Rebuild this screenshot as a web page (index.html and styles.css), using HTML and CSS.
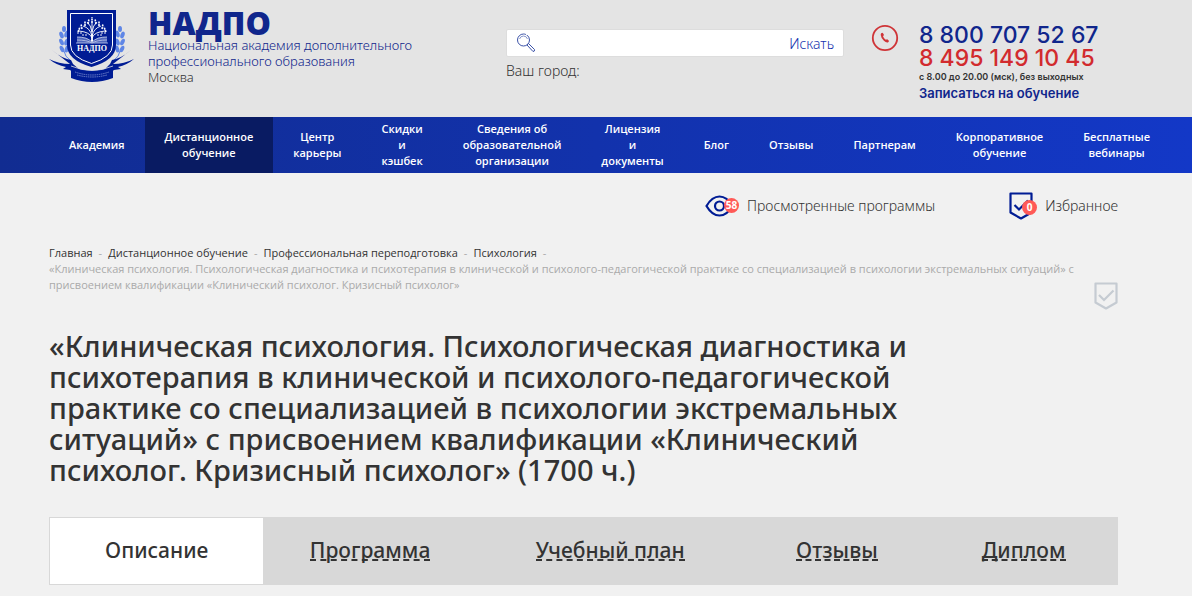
FILE: index.html
```html
<!DOCTYPE html>
<html lang="ru">
<head>
    <meta charset="UTF-8">
    <meta name="viewport" content="width=device-width, initial-scale=1.0">
    <title>НАДПО</title>
    <link rel="stylesheet" href="styles.css">
</head>
<body>
    <header class="header">
        <a class="logo" href="#">
            <svg class="logo-img" width="86" height="74" viewBox="0 0 86 74">
                <!-- колосья -->
                <g fill="#5f86e6">
                    <ellipse cx="15" cy="20" rx="2" ry="3"/>
                    <ellipse cx="12.500" cy="26" rx="2" ry="3.500" transform="rotate(-20 12.500 26)"/>
                    <ellipse cx="17.500" cy="25" rx="2" ry="3.500" transform="rotate(20 17.500 25)"/>
                    <ellipse cx="12.500" cy="33" rx="2" ry="3.500" transform="rotate(-25 12.500 33)"/>
                    <ellipse cx="17.500" cy="33" rx="2" ry="3.500" transform="rotate(20 17.500 33)"/>
                    <ellipse cx="13" cy="40" rx="2" ry="3.500" transform="rotate(-25 13 40)"/>
                    <ellipse cx="17.800" cy="40" rx="2" ry="3.500" transform="rotate(15 17.800 40)"/>
                    <ellipse cx="71" cy="20" rx="2" ry="3"/>
                    <ellipse cx="73.500" cy="26" rx="2" ry="3.500" transform="rotate(20 73.500 26)"/>
                    <ellipse cx="68.500" cy="25" rx="2" ry="3.500" transform="rotate(-20 68.500 25)"/>
                    <ellipse cx="73.500" cy="33" rx="2" ry="3.500" transform="rotate(25 73.500 33)"/>
                    <ellipse cx="68.500" cy="33" rx="2" ry="3.500" transform="rotate(-20 68.500 33)"/>
                    <ellipse cx="73" cy="40" rx="2" ry="3.500" transform="rotate(25 73 40)"/>
                    <ellipse cx="68.200" cy="40" rx="2" ry="3.500" transform="rotate(-15 68.200 40)"/>
                </g>
                <path d="M15 42q1 6 6 9M71 42q-1 6-6 9" fill="none" stroke="#5f86e6"/>
                <!-- лента -->
                <path d="M0 50q10 5 21 5L3 41q9 8 19 10l2 4 7 6v5q-6-1-10-5l-7-1 3-2Q7 56 0 50z" fill="#001c94"/>
                <path d="M85 50q-10 5-21 5l18-14q-9 8-19 10l-2 4-6 6v5q6-1 10-5l7-1-3-2q9-2 16-8z" fill="#001c94"/>
                <path d="M22 57q21 9 42 0v12q-21 8-42 0z" fill="#001c94"/>
                <path d="M22 57q21 9 42 0" fill="none" stroke="#e4e4e4" stroke-width=".8"/>
                <path d="M26 63q17 6 34 0M28 66q15 4 30 0" fill="none" stroke="#8494d2" stroke-width=".8" stroke-dasharray="1.500 .700"/>
                <!-- щит -->
                <path d="M18 1h49v35q0 15-24.500 22Q18 51 18 36z" fill="#001c94"/>
                <path d="M21.500 4.500h42V36q0 12-21 18.500Q21.500 48 21.500 36z" fill="none" stroke="#fff"/>
                <g fill="none" stroke="#fff" stroke-width=".9">
                    <path d="M43 34V14M43 29q-2-6-13-7M43 29q2-6 13-7M43 27q-2-8-9-10M43 27q2-8 9-10M43 23q-1-7-5-10M43 23q1-7 5-10"/>
                    <path d="M29 23l2-5M33 20l-1-5M36 17l0-5M39 15l1-5M57 23l-2-5M53 20l1-5M50 17l0-5M47 15l-1-5M43 14V8" stroke-dasharray="2 .600" stroke-width="1.600"/>
                    <path d="M28 24h6M52 24h6M33 26h5M48 26h5" stroke-dasharray="2 1"/>
                </g>
                <path d="M41.800 34q.700-4 .3-9h1.800q-.4 5 .5 9z" fill="#fff"/>
                <path d="M28 28q10-1 15 5 5-6 15-5v6H28z" fill="#4f65bb"/>
                <path d="M28 28q10 0 15 5 5-5 15-5M28 31q10 0 15 3 5-3 15-3M27 34h32" fill="none" stroke="#c3cbea" stroke-width=".8"/>
                <text class="logo-badge" x="43" y="42" text-anchor="middle">НАДПО</text>
            </svg>
            <span class="logo-text">
                <span class="logo-name">НАДПО</span>
                <span class="logo-desc">Национальная академия дополнительного профессионального образования</span>
                <span class="logo-city">Москва</span>
            </span>
        </a>

        <div class="search">
            <form class="search-form">
                <svg class="search-icon" width="20" height="20" viewBox="0 0 20 20" fill="none" stroke="#3b52a8">
                    <circle cx="7.500" cy="7" r="6" stroke-dasharray="30 1"/>
                    <path d="M3.500 6q1-3 4-3t4 3" stroke="#8998cb"/>
                    <path d="M11 12l1.500-1.500 6 6q.5 2-1.500 2z"/>
                </svg>
                <input class="search-input" type="text" aria-label="Поиск">
                <button class="search-btn" type="submit">Искать</button>
            </form>
            <div class="search-city">Ваш город:</div>
        </div>

        <div class="contacts">
            <svg width="28" height="28" viewBox="0 0 28 28">
                <circle cx="14" cy="14" r="12.200" fill="none" stroke="#cf3437" stroke-width="1.800"/>
                <path d="M10.200 9.300q1.200-1 2 .2l.8 1.600-1 1.200q.8 2 2.800 3.500l1.400-.6 1.500 1.400q.8 1-.8 1.800-1.800.5-4-1.600-3-3-3.200-5.800 0-1.200.5-1.700z" fill="#cf3437"/>
            </svg>
            <div class="contacts-list">
                <a class="phone" href="tel:88007075267">8 800 707 52 67</a>
                <a class="phone phone-red" href="tel:84951491045">8 495 149 10 45</a>
                <span class="worktime">с 8.00 до 20.00 (мск), без выходных</span>
                <a class="signup" href="#">Записаться на обучение</a>
            </div>
        </div>
    </header>

    <nav class="nav">
        <a class="nav-item" href="#">Академия</a>
        <a class="nav-item active" href="#">Дистанционное обучение</a>
        <a class="nav-item" href="#">Центр карьеры</a>
        <a class="nav-item" href="#">Скидки и кэшбек</a>
        <a class="nav-item" href="#">Сведения об образовательной организации</a>
        <a class="nav-item" href="#">Лицензия и документы</a>
        <a class="nav-item" href="#">Блог</a>
        <a class="nav-item" href="#">Отзывы</a>
        <a class="nav-item" href="#">Партнерам</a>
        <a class="nav-item" href="#">Корпоративное обучение</a>
        <a class="nav-item" href="#">Бесплатные вебинары</a>
    </nav>

    <main class="content">
        <div class="user-links">
            <a class="user-link" href="#">
                <span class="user-icon">
                    <svg width="30" height="22" viewBox="0 0 30 22" fill="none" stroke="#001c94" stroke-width="2.200">
                        <path d="M1.500 11Q7 1.500 14.500 1.500T27.500 11Q22 20.500 14.500 20.500T1.500 11z"/>
                        <circle cx="14.500" cy="11" r="4.500"/>
                    </svg>
                    <span class="badge">58</span>
                </span>
                Просмотренные программы
            </a>
            <a class="user-link" href="#">
                <span class="user-icon">
                    <svg width="24" height="28" viewBox="0 0 24 28" fill="none" stroke="#001c94" stroke-width="2.200">
                        <path d="M1.500 1.500h21v19L12 26.500l-10.500-6z" stroke-linejoin="round"/>
                        <path d="M5.500 13l4.500 4.500 9-9"/>
                    </svg>
                    <span class="badge badge-low">0</span>
                </span>
                Избранное
            </a>
        </div>

        <div class="breadcrumbs">
            <a href="#">Главная</a><span class="sep">-</span><a href="#">Дистанционное обучение</a><span class="sep">-</span><a href="#">Профессиональная переподготовка</a><span class="sep">-</span><a href="#">Психология</a><span class="sep">-</span>
            <div class="current">«Клиническая психология. Психологическая диагностика и психотерапия в клинической и психолого-педагогической практике со специализацией в психологии экстремальных ситуаций» с присвоением квалификации «Клинический психолог. Кризисный психолог»</div>
            <button class="favorite" type="button" aria-label="В избранное">
                <svg width="24" height="28" viewBox="0 0 24 28" fill="none" stroke="#c5cbd2" stroke-width="2.200">
                    <path d="M1.500 1.500h21v19L12 26.500l-10.500-6z" stroke-linejoin="round"/>
                    <path d="M5 13l5 5 9.500-9.500"/>
                </svg>
            </button>
        </div>

        <h1 class="title">«Клиническая психология. Психологическая диагностика и психотерапия в клинической и психолого-педагогической практике со специализацией в психологии экстремальных ситуаций» с присвоением квалификации «Клинический психолог. Кризисный психолог» (1700 ч.)</h1>

        <div class="tabs">
            <a class="tab active" href="#"><span>Описание</span></a>
            <a class="tab" href="#"><span>Программа</span></a>
            <a class="tab tab-wide" href="#"><span>Учебный план</span></a>
            <a class="tab tab-small" href="#"><span>Отзывы</span></a>
            <a class="tab tab-small" href="#"><span>Диплом</span></a>
        </div>
    </main>
</body>
</html>
```
FILE: styles.css
```css
* {
    box-sizing: border-box;
}

body {
    margin: 0;
    background-color: #f1f1f1;
    color: #333;
    font-family: 'Noto Sans', 'Open Sans', sans-serif;
    font-size: 14px;
    line-height: 16px;
}

a {
    color: inherit;
    text-decoration: none;
}

/* шапка */
.header {
    display: grid;
    grid-template-columns: 457px 338px 1fr;
    align-items: start;
    padding: 9px 49px 0;
    height: 117px;
    background-color: #e4e4e4;
}

.logo {
    display: flex;
    gap: 13px;
    font-size: 13px;
    font-weight: 300;
}

.logo-img {
    flex: none;
}

.logo-badge {
    fill: #fff;
    font: bold 8px 'Liberation Serif', serif;
}

.logo-text {
    display: flex;
    flex-direction: column;
    width: 280px;
}

.logo-name {
    color: #10268c;
    font-family: 'Open Sans', sans-serif;
    font-size: 32px;
    font-weight: 800;
    line-height: 28px;
}

.logo-desc {
    color: #10268c;
}

.search {
    padding-top: 20px;
}

.search-form {
    display: flex;
    align-items: center;
    height: 28px;
    padding: 0 9px;
    background-color: #fff;
    border: 1px solid #ddd;
    border-radius: 2px;
}

.search-input {
    flex: 1;
    min-width: 0;
    border: none;
    outline: none;
    background: none;
}

.search-btn {
    padding: 0;
    border: none;
    background: none;
    color: #1431ae;
    font: 300 14px 'Noto Sans', sans-serif;
    cursor: pointer;
}

.search-city {
    padding-top: 6px;
    font-weight: 300;
}

.contacts {
    display: flex;
    gap: 20px;
    padding: 15px 0 0 27px;
}

.contacts-list {
    display: flex;
    flex-direction: column;
    color: #10268c;
    font-family: Inter, sans-serif;
    white-space: nowrap;
}

.phone {
    font-size: 23px;
    font-weight: 500;
    line-height: 23px;
}

.phone-red {
    color: #d22b2e;
}

.worktime {
    color: #333;
    font-size: 9px;
    font-weight: 600;
    line-height: 14px;
}

.signup {
    font-size: 13px;
    font-weight: 600;
    line-height: 18px;
}

/* меню */
.nav {
    display: flex;
    padding: 0 22px 0 49px;
    background: linear-gradient(90deg, #112c91, #1338c7);
}

.nav-item {
    display: flex;
    align-items: center;
    justify-content: center;
    width: min-content;
    min-height: 56px;
    padding: 0 20px;
    box-sizing: content-box;
    color: #fff;
    font-family: 'Open Sans', sans-serif;
    font-size: 11px;
    font-weight: 600;
    text-align: center;
}

.nav-item.active {
    background-color: #091b62;
}

.content {
    padding: 0 74px 0 49px;
}

.user-links {
    display: flex;
    justify-content: flex-end;
    gap: 74px;
    padding-top: 19px;
    font-weight: 300;
}

.user-link {
    display: flex;
    align-items: center;
    gap: 12px;
    height: 28px;
}

.user-icon {
    display: flex;
    position: relative;
}

.badge {
    position: absolute;
    top: 3px;
    right: -4px;
    width: 15px;
    height: 15px;
    border-radius: 50%;
    background-color: #ff5a57;
    color: #fff;
    font-size: 10px;
    font-weight: 700;
    line-height: 15px;
    text-align: center;
}

.badge-low {
    top: 8px;
}

.breadcrumbs {
    position: relative;
    padding: 25px 20px 0 0;
    font-family: 'Open Sans', sans-serif;
    font-size: 11px;
}

.sep {
    padding: 0 6px;
    color: #aaa;
}

.current {
    color: #aaa;
}

.favorite {
    position: absolute;
    right: 0;
    bottom: -17px;
    display: flex;
    padding: 0;
    border: none;
    background: none;
    cursor: pointer;
}

.title {
    max-width: 870px;
    margin: 37px 0 32px;
    font-size: 29px;
    font-weight: 500;
    line-height: 31px;
}

/* вкладки */
.tabs {
    display: flex;
    border: 1px solid #d8d8d8;
    background-color: #d8d8d8;
    font-size: 21px;
    font-weight: 500;
}

.tab {
    display: flex;
    flex: 0 0 20%;
    align-items: center;
    justify-content: center;
    height: 66px;
}

.tab span {
    border-bottom: 2px dashed #333;
    line-height: 18px;
}

.tab-wide {
    flex: 0 0 25%;
}

.tab-small {
    flex: 1;
}

.tab.active {
    background-color: #fff;
}

.tab.active span {
    border-color: transparent;
}
```
